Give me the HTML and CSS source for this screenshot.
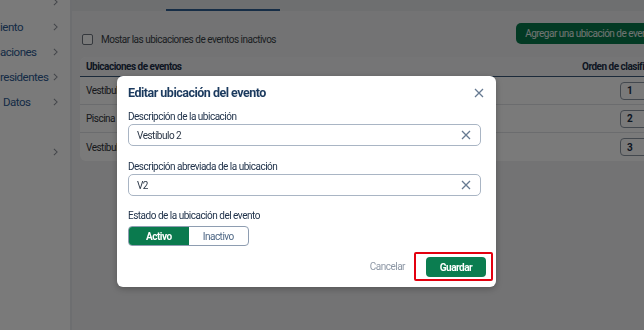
FILE: index.html
```html
<!DOCTYPE html>
<html lang="es">
<head>
  <meta charset="UTF-8">
  <meta name="viewport" content="width=device-width,initial-scale=1.0">
  <title>Ubicaciones de eventos</title>
  <link rel="stylesheet" href="styles.css">
</head>
<body>
  <div class="app">
    <!-- side menu, scrolled so the labels are cut on the left -->
    <aside class="sidebar">
      <nav class="menu">
        <a class="menu-item"><span class="menu-label"></span><svg class="chev" viewBox="0 0 6 10"><path d="M1 1l4 4-4 4"/></svg></a>
        <a class="menu-item"><span class="menu-label">iento</span><svg class="chev" viewBox="0 0 6 10"><path d="M1 1l4 4-4 4"/></svg></a>
        <a class="menu-item"><span class="menu-label">aciones</span><svg class="chev" viewBox="0 0 6 10"><path d="M1 1l4 4-4 4"/></svg></a>
        <a class="menu-item"><span class="menu-label">residentes</span><svg class="chev" viewBox="0 0 6 10"><path d="M1 1l4 4-4 4"/></svg></a>
        <a class="menu-item"><span class="menu-label indent">Datos</span><svg class="chev" viewBox="0 0 6 10"><path d="M1 1l4 4-4 4"/></svg></a>
        <a class="menu-item"></a>
        <a class="menu-item"><span class="menu-label"></span><svg class="chev" viewBox="0 0 6 10"><path d="M1 1l4 4-4 4"/></svg></a>
      </nav>
    </aside>

    <main class="content">
      <div class="tabs">
        <span class="tab"></span>
        <span class="tab active"></span>
      </div>

      <div class="toolbar">
        <label class="check">
          <span class="check-box"></span>
          Mostar las ubicaciones de eventos inactivos
        </label>
        <button class="btn-add">Agregar una ubicación de evento</button>
      </div>

      <div class="table-card">
        <div class="t-row t-head">
          <div class="cell">Ubicaciones de eventos</div>
          <div class="cell">Orden de clasificación</div>
        </div>
        <div class="t-row">
          <div class="cell">Vestíbulo 1</div>
          <div class="cell"><span class="order">1</span></div>
        </div>
        <div class="t-row">
          <div class="cell">Piscina principal</div>
          <div class="cell"><span class="order">2</span></div>
        </div>
        <div class="t-row">
          <div class="cell">Vestíbulo 2</div>
          <div class="cell"><span class="order">3</span></div>
        </div>
      </div>
    </main>
  </div>

  <!-- dialog -->
  <div class="backdrop"></div>
  <div class="modal">
    <div class="modal-head">
      <h2 class="modal-title">Editar ubicación del evento</h2>
      <svg class="x-icon close" viewBox="0 0 10 10"><path d="M1 1l8 8M9 1l-8 8"/></svg>
    </div>

    <div class="modal-body">
      <div class="field">
        <label class="field-label">Descripción de la ubicación</label>
        <div class="input">
          <span>Vestíbulo 2</span>
          <svg class="x-icon" viewBox="0 0 10 10"><path d="M1 1l8 8M9 1l-8 8"/></svg>
        </div>
      </div>
      <div class="field">
        <label class="field-label">Descripción abreviada de la ubicación</label>
        <div class="input">
          <span>V2</span>
          <svg class="x-icon" viewBox="0 0 10 10"><path d="M1 1l8 8M9 1l-8 8"/></svg>
        </div>
      </div>
      <div class="field">
        <label class="field-label state">Estado de la ubicación del evento</label>
        <div class="segmented">
          <span class="seg on">Activo</span>
          <span class="seg">Inactivo</span>
        </div>
      </div>
    </div>

    <div class="modal-foot">
      <span class="btn-cancel">Cancelar</span>
      <span class="highlight"><button class="btn-save">Guardar</button></span>
    </div>
  </div>
</body>
</html>
```

FILE: styles.css
```css
* { margin:0; padding:0; box-sizing:border-box; }
body {
  width:644px; height:330px; overflow:hidden;
  font-family:Roboto, "Noto Sans", sans-serif;
  letter-spacing:-0.5px;
  background:#f0f1f3;
}
.app {
  display:flex;
  height:330px;
  overflow:hidden;
}

/* side menu */
.sidebar {
  width:72px; flex-shrink:0;
  background:#fff;
  border-right:2px solid #e4e6ea;
  overflow:hidden;
}
.menu { margin-top:-11px; }
.menu-item {
  display:flex; align-items:center;
  height:25px;
  color:#2c5a92; font-size:11.5px;
  white-space:nowrap;
}
.menu-label { width:53px; }
.menu-label.indent { padding-left:3px; }
.chev {
  width:5px; height:8px;
  fill:none; stroke:#8b9099; stroke-width:1.3;
}

/* main column */
.content {
  width:650px; flex-shrink:0;
  padding-left:8px;
}
.tabs {
  display:flex; height:11px;
  background:#e6e8eb;
  margin-left:-8px;
}
.tab { width:94px; }
.tab.active { width:114px; border-bottom:2px solid #2f5f93; }

.toolbar {
  display:flex; justify-content:space-between; align-items:flex-start;
  height:46px;
  padding-right:58px;
}
.check {
  display:flex; align-items:center; gap:8px;
  margin-top:23px; margin-left:2px;
  font-size:10px; color:#3a3f47;
}
.check-box {
  width:11px; height:11px;
  border:1.5px solid #6f7680; border-radius:2px;
  background:#fff;
}
.btn-add {
  margin-top:12px;
  height:21px; padding:0 9px;
  border:none; border-radius:5px;
  background:#087a4d; color:#e8f2ee;
  font:400 10px Roboto, sans-serif;
  letter-spacing:-0.5px;
  white-space:nowrap;
}

/* table */
.table-card {
  background:#fff;
  border-radius:6px;
  overflow:hidden;
  margin-right:12px;
}
.t-row {
  display:grid; grid-template-columns:1fr 134px;
  height:28px; align-items:center;
  border-bottom:1px solid #dfe2e7;
  font-size:10px; color:#30343a;
}
.t-row:last-child { border-bottom:none; }
.t-head {
  height:20px;
  font-weight:700; color:#1c2f48;
  border-bottom:1.5px solid #39587a;
  background:#f4f5f7;
}
.cell { padding-left:6px; white-space:nowrap; }
.order {
  display:flex; align-items:center;
  width:40px; height:18px;
  margin-left:38px; padding-left:6px;
  border:1px solid #8d96a3; border-radius:4px;
  font-weight:700; color:#1c2f48;
}

/* dialog layer */
.backdrop {
  position:fixed; inset:0;
  background:rgba(0,0,0,0.52);
}
.modal {
  position:absolute; left:117px; top:76px;
  width:379px; height:211px;
  background:#fff;
  border-radius:6px;
  box-shadow:0 2px 6px rgba(0,0,0,0.25);
  padding-left:11px;
}
.modal-head {
  display:flex; justify-content:space-between; align-items:center;
  height:20px; margin-top:6px;
  padding-right:12px;
}
.modal-title {
  font-size:12.5px; font-weight:700;
  color:#1b3a5e;
}
.x-icon {
  width:10px; height:10px;
  fill:none; stroke:#667a91; stroke-width:1.3;
}
.close { margin-top:2px; }
.modal-body { padding-right:15px; }
.field-label {
  display:block;
  margin-top:15px; margin-bottom:1px;
  line-height:12px;
  font-size:10px; color:#22344c;
}
.field:first-child .field-label { margin-top:9px; }
.field-label.state { margin-top:14px; margin-bottom:4px; }
.input {
  display:flex; justify-content:space-between; align-items:center;
  height:22px;
  padding:0 9px 0 8px;
  border:1px solid #a9b5c4; border-radius:5px;
  font-size:10px; color:#2a3646;
}
.segmented {
  display:flex;
  width:121px; height:20px;
  border:1px solid #8e9db1; border-radius:4px;
  overflow:hidden;
}
.seg {
  flex:1;
  display:flex; align-items:center; justify-content:center;
  font-size:10px; color:#4d6684;
}
.seg.on {
  background:#0a7a4e; color:#fff;
  font-weight:700;
}

.modal-foot {
  display:flex; justify-content:flex-end; align-items:center;
  gap:9px;
  margin-top:6px;
  padding-right:3px;
}
.btn-cancel { font-size:10px; color:#8d97a5; }
.highlight {
  display:flex;
  padding:3px 5px 2px 10px;
  border:2px solid #e3000f; border-radius:2px;
}
.btn-save {
  width:60px; height:20px;
  border:none; border-radius:4px;
  background:#0b7d50; color:#fff;
  font:700 10px Roboto, sans-serif;
  letter-spacing:-0.5px;
}
```
